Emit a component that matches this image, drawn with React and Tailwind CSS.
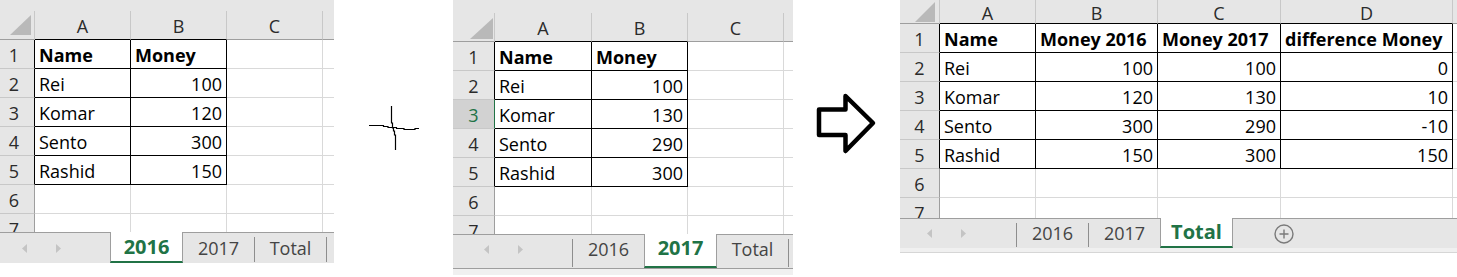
import clsx from 'clsx';

const sheets = {
  y2016: {
    box: 'w-[334px]',
    topH: 'h-[11px]',
    headerH: 'h-[29px]',
    rowHdrW: 'w-[35px]',
    rowNumPad: 'pr-[6px]',
    tri: 'mr-[3px] mb-[4px] h-[20px] w-[21px]',
    cols: [
      { label: 'A', w: 'w-[96px]' },
      { label: 'B', w: 'w-[96px]' },
      { label: 'C', w: 'w-[96px]' },
    ],
    data: [
      ['Name', 'Money'],
      ['Rei', 100],
      ['Komar', 120],
      ['Sento', 300],
      ['Rashid', 150],
    ],
    row7H: 'h-[18px]',
    tabs: ['2016', '2017', 'Total'],
    active: 0,
    bar: 'h-[31px]',
    navW: 'w-[110px]',
    navPad: 'pl-[22px]',
    tabPad: '',
  },
  y2017: {
    box: 'w-[340px]',
    topH: 'h-[13px]',
    headerH: 'h-[29px]',
    rowHdrW: 'w-[42px]',
    rowNumPad: '',
    tri: 'mr-[1px] mb-[2px] h-[21px] w-[23px]',
    cols: [
      { label: 'A', w: 'w-[97px]' },
      { label: 'B', w: 'w-[96px]' },
      { label: 'C', w: 'w-[96px]' },
    ],
    data: [
      ['Name', 'Money'],
      ['Rei', 100],
      ['Komar', 130],
      ['Sento', 290],
      ['Rashid', 300],
    ],
    selectedRow: 3,
    row7H: 'h-[18px]',
    tabs: ['2016', '2017', 'Total'],
    active: 1,
    bar: 'h-[35px] border-b',
    navW: 'w-[119px]',
    navPad: 'pl-[31px]',
    tabPad: 'pb-[4px]',
    strip: 'h-[6px] bg-[#f0f0f0]',
  },
  total: {
    box: 'w-[557px]',
    topH: 'h-0',
    headerH: 'h-[24px]',
    rowHdrW: 'w-[40px]',
    rowNumPad: '',
    tri: 'mr-[4px] mb-[1px] h-[20px] w-[20px]',
    cols: [
      { label: 'A', w: 'w-[96px]' },
      { label: 'B', w: 'w-[122px]' },
      { label: 'C', w: 'w-[123px]' },
      { label: 'D', w: 'w-[172px]' },
    ],
    data: [
      ['Name', 'Money 2016', 'Money 2017', 'difference Money'],
      ['Rei', 100, 100, 0],
      ['Komar', 120, 130, 10],
      ['Sento', 300, 290, -10],
      ['Rashid', 150, 300, 150],
    ],
    row7H: 'h-[20px]',
    tabs: ['2016', '2017', 'Total'],
    active: 2,
    bar: 'h-[30px]',
    navW: 'w-[116px]',
    navPad: 'pl-[27px]',
    tabPad: '',
    plus: true,
    strip: 'h-[5px] bg-[#f0f0f0] border-b border-[#d6d6d6]',
  },
};

function Corner({ className }) {
  return (
    <svg className={clsx('shrink-0', className)} viewBox="0 0 20 20" preserveAspectRatio="none">
      <polygon points="20,0 20,20 0,20" fill="#b9b9b9" />
    </svg>
  );
}

function NavArrow({ dir, className }) {
  return (
    <svg className={clsx('h-[9px] w-[5px] shrink-0', className)} viewBox="0 0 5 9">
      <polygon points={dir === 'left' ? '5,0 0,4.5 5,9' : '0,0 5,4.5 0,9'} fill="#c4c4c4" />
    </svg>
  );
}

function Sheet({ s }) {
  const tableCols = s.data[0].length;

  return (
    <div className={clsx('flex shrink-0 flex-col self-start', s.box)}>
      <div className="flex flex-col bg-[#e6e6e6]">
        <div className={s.topH} />
        {/* column letters */}
        <div className={clsx('flex', s.headerH)}>
          <div
            className={clsx(
              'flex shrink-0 items-end justify-end border-r border-b border-r-[#c8c8c8] border-b-[#9e9e9e]',
              s.rowHdrW
            )}
          >
            <Corner className={s.tri} />
          </div>
          {s.cols.map((c, i) => (
            <div
              key={c.label}
              className={clsx(
                'flex shrink-0 items-center justify-center border-r border-b border-r-[#c8c8c8] pt-[3px] text-[#2b2b2b]',
                c.w,
                i < tableCols ? 'border-b-black' : 'border-b-[#9e9e9e]'
              )}
            >
              {c.label}
            </div>
          ))}
          <div className="min-w-0 flex-1 border-b border-[#9e9e9e]" />
        </div>

        {/* rows */}
        {[1, 2, 3, 4, 5, 6, 7].map((n) => {
          const inTable = n <= s.data.length;
          const row = s.data[n - 1] || [];
          const sel = n === s.selectedRow;
          return (
            <div key={n} className={clsx('overflow-hidden', n === 7 ? s.row7H : 'h-[29px]')}>
              <div className="flex h-[29px] bg-white">
                <div
                  className={clsx(
                    'flex shrink-0 items-center justify-center border-r border-b border-b-[#c8c8c8] pt-[2px]',
                    s.rowHdrW,
                    s.rowNumPad,
                    sel ? 'bg-[#d2d2d2] text-[#217346]' : 'bg-[#e6e6e6] text-[#2b2b2b]',
                    sel ? 'border-r-[#217346]' : inTable ? 'border-r-black' : 'border-r-[#9e9e9e]'
                  )}
                >
                  {n}
                </div>
                {s.cols.map((c, i) => {
                  const v = row[i];
                  const cellIn = inTable && i < tableCols;
                  const isNum = typeof v === 'number';
                  return (
                    <div
                      key={c.label}
                      className={clsx(
                        'flex shrink-0 items-center overflow-hidden whitespace-nowrap border-r border-b px-[4px] pt-[2px]',
                        c.w,
                        cellIn ? 'border-black' : 'border-[#d9d9d9]',
                        isNum && 'justify-end',
                        n === 1 && 'font-bold'
                      )}
                    >
                      {v}
                    </div>
                  );
                })}
                <div className="min-w-0 flex-1 border-b border-[#d9d9d9]" />
              </div>
            </div>
          );
        })}
      </div>

      {/* sheet tabs */}
      <div className={clsx('flex border-t border-[#9e9e9e] bg-[#e6e6e6]', s.bar)}>
        <div className={clsx('flex shrink-0 items-center', s.navW, s.navPad, s.tabPad)}>
          <NavArrow dir="left" />
          <NavArrow dir="right" className="ml-[29px]" />
        </div>
        {s.tabs.map((t, i) => {
          if (i === s.active) {
            return (
              <div
                key={t}
                className={clsx(
                  '-mt-px flex w-[73px] shrink-0 items-center justify-center border-x border-b-2 border-x-[#9e9e9e] border-b-[#217346] bg-white text-[20px] font-bold text-[#217346]',
                  s.tabPad
                )}
              >
                {t}
              </div>
            );
          }
          const sepBefore = i === 0 || i - 1 !== s.active;
          const last = i === s.tabs.length - 1;
          return [
            sepBefore && <div key={t + 'a'} className="mt-[4px] mb-[1px] w-px shrink-0 bg-[#8e8e8e]" />,
            <div
              key={t}
              className={clsx('flex w-[71px] shrink-0 items-center justify-center text-[#444]', s.tabPad)}
            >
              {t}
            </div>,
            last && <div key={t + 'b'} className="mt-[4px] mb-[1px] w-px shrink-0 bg-[#8e8e8e]" />,
          ];
        })}
        {s.plus && (
          <div className="ml-[41px] flex items-center">
            <svg className="h-[20px] w-[20px]" viewBox="0 0 20 20">
              <circle cx="10" cy="10" r="9" fill="none" stroke="#7a7a7a" strokeWidth="1.4" />
              <path d="M10 5.5v9M5.5 10h9" stroke="#7a7a7a" strokeWidth="1.4" />
            </svg>
          </div>
        )}
      </div>
      {s.strip && <div className={s.strip} />}
    </div>
  );
}

function CrossCursor() {
  return (
    <svg className="ml-[33px] mt-[105px] h-[46px] w-[52px]" viewBox="0 0 52 46">
      <polyline
        points="24.5,1 24.5,18 25.5,18 25.5,23 26.5,23 26.5,26 27.5,26 27.5,30 28.5,30 28.5,45"
        fill="none"
        stroke="#000"
        strokeWidth="1.2"
      />
      <polyline
        points="2,20.5 16.5,20.5 16.5,21.5 21,21.5 21,22.5 29.5,22.5 29.5,23.5 37,23.5 37,24.5 48,24.5 48,23.5 52,23.5"
        fill="none"
        stroke="#000"
        strokeWidth="1.2"
      />
    </svg>
  );
}

function BigArrow() {
  return (
    <svg className="ml-[19px] mt-[88px] h-[70px] w-[70px]" viewBox="0 0 70 70">
      <polygon
        points="7,21.5 33.5,21.5 33.5,8 61,35 33.5,63 33.5,47 7,47"
        fill="#fff"
        stroke="#000"
        strokeWidth="4.5"
        strokeLinejoin="round"
      />
    </svg>
  );
}

export default function App() {
  return (
    <div className="flex h-[277px] w-[1457px] overflow-hidden bg-white font-['Open_Sans',sans-serif] text-[18px] leading-normal text-black">
      <Sheet s={sheets.y2016} />
      <div className="w-[119px] shrink-0">
        <CrossCursor />
      </div>
      <Sheet s={sheets.y2017} />
      <div className="w-[107px] shrink-0">
        <BigArrow />
      </div>
      <Sheet s={sheets.total} />
    </div>
  );
}
